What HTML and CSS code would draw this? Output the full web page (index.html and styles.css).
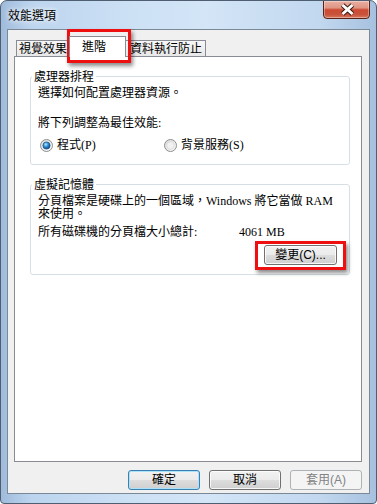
FILE: index.html
```html
<!DOCTYPE html>
<html lang="zh-Hant">
<head>
  <meta charset="UTF-8">
  <title>效能選項</title>
  <link rel="stylesheet" href="styles.css">
</head>
<body>

<div class="window">
  <!-- Barra de título -->
  <div class="titlebar">
    <span class="title">效能選項</span>
    <button class="close-btn" title="關閉">
      <svg width="45" height="17" viewBox="0 0 45 17">
        <path d="M18.5 4 L28.5 13 M28.5 4 L18.5 13" stroke="#3b1b14" stroke-width="5"/>
        <path d="M18.5 4 L28.5 13 M28.5 4 L18.5 13" stroke="#ffffff" stroke-width="3"/>
      </svg>
    </button>
  </div>

  <div class="client">
    <!-- Pestañas -->
    <div class="tabs">
      <div class="tab tab-visual">視覺效果</div>
      <div class="tab active">進階</div>
      <div class="tab tab-dep">資料執行防止</div>
    </div>

    <div class="panel">
      <fieldset class="group group-cpu">
        <legend>處理器排程</legend>
        <p class="line first">選擇如何配置處理器資源。</p>
        <p class="line second">將下列調整為最佳效能:</p>
        <div class="radios">
          <label class="radio-item radio-first">
            <svg class="radio" width="13" height="13" viewBox="0 0 13 13">
              <defs>
                <linearGradient id="ring" x1="0" y1="0" x2="1" y2="1">
                  <stop offset="0" stop-color="#d9d9d9"/>
                  <stop offset="1" stop-color="#fbfbfb"/>
                </linearGradient>
                <radialGradient id="dot" cx="40%" cy="35%" r="70%">
                  <stop offset="0" stop-color="#b5ebff"/>
                  <stop offset="0.45" stop-color="#2f93dc"/>
                  <stop offset="1" stop-color="#0b3d73"/>
                </radialGradient>
              </defs>
              <circle cx="6.5" cy="6.5" r="6" fill="url(#ring)" stroke="#8c8e8f"/>
              <circle cx="6.5" cy="6.5" r="3.6" fill="url(#dot)" stroke="#1d4d78" stroke-width="0.7"/>
            </svg>
            程式(P)
          </label>
          <label class="radio-item">
            <svg class="radio" width="13" height="13" viewBox="0 0 13 13">
              <circle cx="6.5" cy="6.5" r="6" fill="url(#ring)" stroke="#8c8e8f"/>
              <circle cx="6.5" cy="6.5" r="3.8" fill="#f1f1f1" stroke="#d6d6d6" stroke-width="0.7"/>
            </svg>
            背景服務(S)
          </label>
        </div>
      </fieldset>

      <fieldset class="group group-mem">
        <legend>虛擬記憶體</legend>
        <p class="desc">分頁檔案是硬碟上的一個區域，Windows 將它當做 RAM<br>來使用。</p>
        <div class="total">
          <span class="total-label">所有磁碟機的分頁檔大小總計:</span>
          <span>4061 MB</span>
        </div>
        <div class="change-row">
          <button class="btn btn-change">變更(C)...</button>
        </div>
      </fieldset>
    </div>

    <!-- Botones inferiores -->
    <div class="actions">
      <button class="btn default">確定</button>
      <button class="btn">取消</button>
      <button class="btn" disabled>套用(A)</button>
    </div>
  </div>

  <!-- Recuadros rojos de resaltado -->
  <div class="highlight hl-tab"></div>
  <div class="highlight hl-change"></div>
</div>

</body>
</html>
```

FILE: styles.css
```css
* {
  box-sizing: border-box;
}

body {
  margin: 0;
  width: 377px;
  height: 504px;
  background: #fff;
  font-family: "Liberation Serif", "Noto Sans CJK TC", serif;
  font-size: 12px;
  color: #000;
}

.window {
  position: relative;
  display: flex;
  flex-direction: column;
  height: 504px;
  padding: 0 6px 9px;
  border: 1px solid #4f5e70;
  border-radius: 7px 7px 4px 4px;
  background: linear-gradient(to right, #9fbbdb 0%, #bcd4ee 8%, #cde1f5 35%, #d3e5f7 55%, #c2d8ef 85%, #a6c1df 100%);
  overflow: hidden;
}

.titlebar {
  display: flex;
  justify-content: space-between;
  align-items: center;
  height: 28px;
  padding-left: 1px;
}

.title {
  font-family: "Noto Sans CJK TC", sans-serif;
  font-size: 12px;
  line-height: 14px;
  text-shadow: 0 0 4px rgba(255, 255, 255, 0.95), 0 0 8px rgba(255, 255, 255, 0.8);
}

.close-btn {
  align-self: flex-start;
  display: block;
  width: 47px;
  height: 19px;
  margin-top: -1px;
  padding: 0;
  border: 1px solid #5a2218;
  border-radius: 0 0 4px 4px;
  background: linear-gradient(#eab0a2 0%, #df9583 40%, #cc4a33 52%, #c9533b 80%, #d77a5f 100%);
  box-shadow: inset 0 0 0 1px rgba(255, 255, 255, 0.35);
}

.close-btn svg {
  display: block;
}

.client {
  display: flex;
  flex-direction: column;
  height: 465px;
  border: 1px solid #7b8896;
  background: #f0f0f0;
}

.tabs {
  display: flex;
  align-items: flex-end;
  height: 26px;
  padding-left: 8px;
}

.tab {
  height: 16px;
  border: 1px solid #898c95;
  border-bottom: none;
  background: linear-gradient(#f7f7f7, #e8e8e8);
  font-family: "Noto Sans CJK TC", sans-serif;
  line-height: 14px;
  white-space: nowrap;
}

.tab + .tab {
  margin-left: -1px;
}

.tab-visual {
  width: 54px;
  padding-left: 2px;
}

.tab-dep {
  width: 81px;
  padding-left: 4px;
}

.tab.active {
  position: relative;
  z-index: 1;
  width: 57px;
  height: 21px;
  margin-bottom: -1px;
  padding: 2px 0 0 12px;
  background: #fff;
}

.panel {
  height: 406px;
  margin: 0 7px 0 6px;
  padding: 0 11px 0 15px;
  border: 1px solid #898c95;
  background: #fff;
}

.group {
  margin: 12px 0 0;
  padding: 0 7px;
  min-width: 0;
  border: 1px solid #d5dfe5;
  border-radius: 3px;
}

.group legend {
  margin-left: -6px;
  padding: 0 2px;
  font-family: "Noto Sans CJK TC", sans-serif;
  line-height: 14px;
}

.line {
  margin: 0;
  line-height: 14px;
}

.line.first {
  padding-top: 3px;
}

.line.second {
  margin-top: 16px;
}

.radios {
  display: flex;
  align-items: center;
  height: 14px;
  margin-top: 8px;
  margin-bottom: 12px;
}

.radio-item {
  display: flex;
  align-items: center;
  gap: 4px;
  line-height: 14px;
}

.radio-first {
  width: 124px;
}

.radio {
  display: block;
  margin-left: 2px;
}

.desc {
  margin: 0;
  padding-top: 4px;
  line-height: 13px;
}

.total {
  display: flex;
  margin-top: 4px;
  line-height: 14px;
}

.total-label {
  width: 201px;
}

.change-row {
  display: flex;
  justify-content: flex-end;
  margin-top: 6px;
  padding-right: 5px;
  padding-bottom: 9px;
}

.btn {
  width: 72px;
  height: 20px;
  padding: 0;
  border: 1px solid #707070;
  border-radius: 3px;
  background: linear-gradient(#f2f2f2 0%, #ebebeb 48%, #dddddd 52%, #cfcfcf 100%);
  box-shadow: inset 0 0 0 1px rgba(255, 255, 255, 0.8);
  font-family: "Liberation Sans", "Noto Sans CJK TC", sans-serif;
  font-size: 12px;
  line-height: 14px;
  color: #000;
}

.btn-change {
  width: 73px;
}

.btn.default {
  border-color: #3c7fb1;
  box-shadow: inset 0 0 0 1px #a9e2f9;
}

.btn:disabled {
  border-color: #adb2b5;
  background: #f4f4f4;
  box-shadow: none;
  color: #838383;
}

.actions {
  display: flex;
  justify-content: flex-end;
  gap: 9px;
  margin-top: 8px;
  padding-right: 7px;
}

.highlight {
  position: absolute;
  border: 3px solid #ee1010;
  box-shadow: 2px 3px 4px rgba(0, 0, 0, 0.45);
}

.hl-tab {
  left: 66px;
  top: 28px;
  width: 64px;
  height: 34px;
}

.hl-change {
  left: 254px;
  top: 240px;
  width: 91px;
  height: 29px;
}
```
